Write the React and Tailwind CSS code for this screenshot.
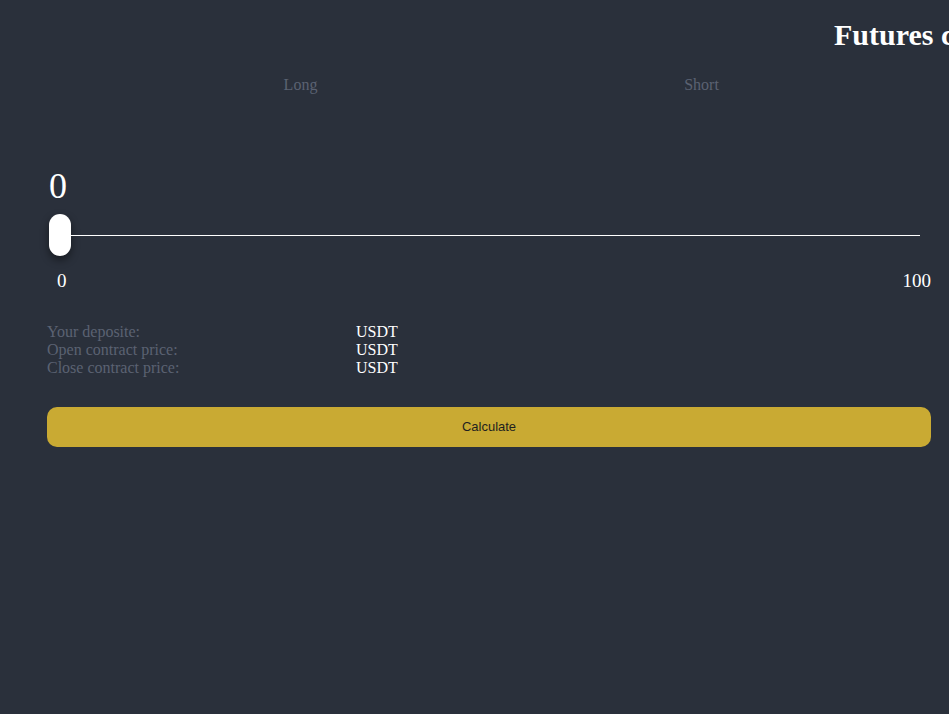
import React, { useState } from 'react';

const rows = [
  { label: 'Your deposite:', unit: 'USDT' },
  { label: 'Open contract price:', unit: 'USDT' },
  { label: 'Close contract price:', unit: 'USDT' },
];

const App = () => {
  const [leverage, setLeverage] = useState(0);
  const [side, setSide] = useState('long');

  return (
    <div className="min-h-[714px] w-full overflow-hidden bg-[#2a303b] text-white font-['Liberation_Serif',serif]">
      {/* Title */}
      <h1 className="ml-[834px] mt-[17px] whitespace-nowrap text-[30px] font-bold leading-[36px] text-white">
        Futures calculator
      </h1>

      {/* Long / Short tabs */}
      <div className="ml-[100px] mt-[23px] grid w-[802px] grid-cols-2 text-[16px] leading-[18px] text-[#5b6272]">
        <button
          onClick={() => setSide('long')}
          className={`text-center ${side === 'long' ? 'text-[#5b6272]' : 'text-[#5b6272]'}`}
        >
          Long
        </button>
        <button onClick={() => setSide('short')} className="text-center">
          Short
        </button>
      </div>

      <main className="pl-[47px] pr-[18px]">
        {/* Leverage value */}
        <div className="mt-[73px] pl-[2px] text-[36px] leading-[38px] text-white">{leverage}</div>

        {/* Slider */}
        <div className="mt-[9px] flex items-center pl-[2px] pr-[11px]">
          <div className="h-[42px] w-[22px] shrink-0 rounded-full bg-white shadow-[0_4px_8px_rgba(0,0,0,0.45)]"></div>
          <div className="h-px flex-1 bg-white"></div>
        </div>

        <div className="mt-[14px] flex justify-between pl-[10px] text-[19px] leading-[22px] text-white">
          <span>0</span>
          <span>100</span>
        </div>

        {/* Info rows */}
        <div className="mt-[31px] text-[16px] leading-[18px]">
          {rows.map((row, index) => (
            <div key={index} className="flex">
              <span className="w-[309px] text-[#5b6272]">{row.label}</span>
              <span className="text-white">{row.unit}</span>
            </div>
          ))}
        </div>

        {/* Calculate */}
        <button
          onClick={() => setLeverage(leverage)}
          className="mt-[30px] h-[40px] w-full rounded-[10px] bg-[#c9aa33] font-['Liberation_Sans',Arial,sans-serif] text-[13px] text-[#1f1f1f]"
        >
          Calculate
        </button>
      </main>
    </div>
  );
};

export default App;
